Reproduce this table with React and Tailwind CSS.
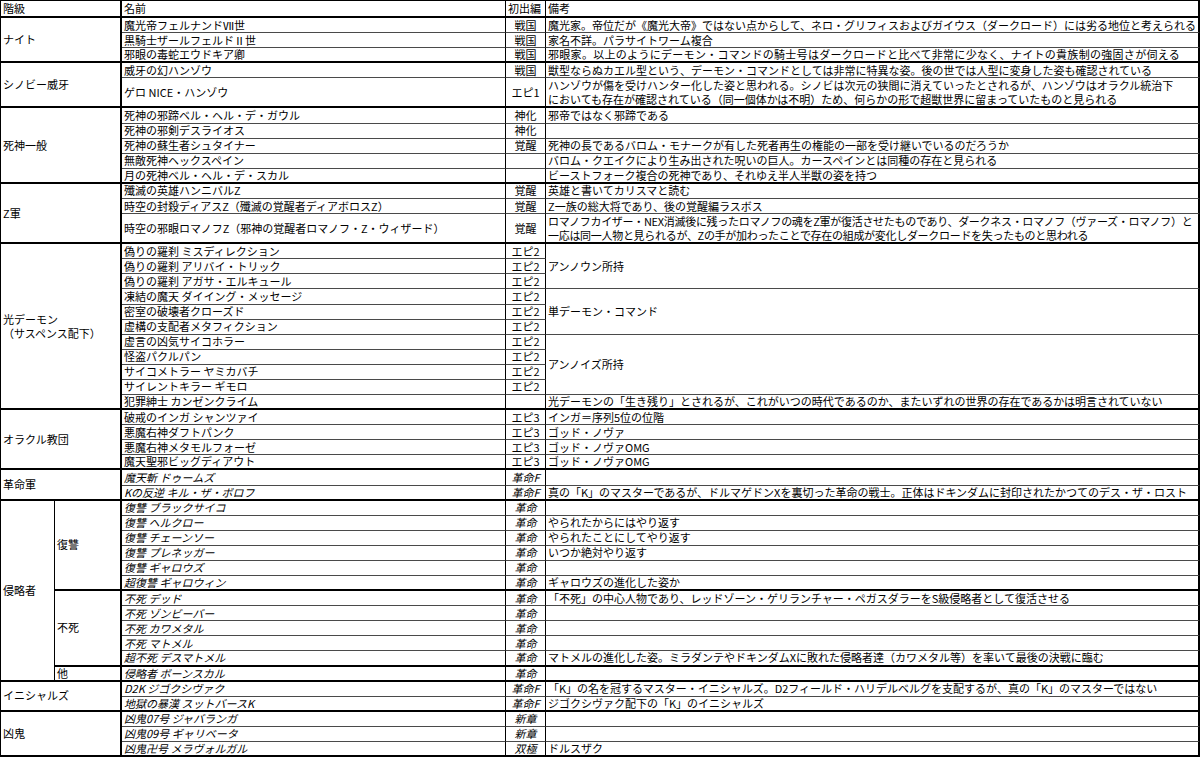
import React from 'react';

// 行データ: n=名前, e=初出編, r=備考, h=行の高さ(単位), rs=備考の結合行数, skip=備考セルが上と結合, t=備考の字間
const GROUPS = [
  {
    label: 'ナイト',
    segs: [{ rows: [
      { n: '魔光帝フェルナンドⅦ世', e: '戦国', r: '魔光家。帝位だが《魔光大帝》ではない点からして、ネロ・グリフィスおよびガイウス（ダークロード）には劣る地位と考えられる' },
      { n: '黒騎士ザールフェルドⅡ世', e: '戦国', r: '家名不詳。パラサイトワーム複合' },
      { n: '邪眼の毒蛇エウドキア卿', e: '戦国', r: '邪眼家。以上のようにデーモン・コマンドの騎士号はダークロードと比べて非常に少なく、ナイトの貴族制の強固さが伺える', t: 'tracking-[0.3px]' },
    ] }],
  },
  {
    label: 'シノビー威牙',
    segs: [{ rows: [
      { n: '威牙の幻ハンゾウ', e: '戦国', r: '獣型ならぬカエル型という、デーモン・コマンドとしては非常に特異な姿。後の世では人型に変身した姿も確認されている' },
      { n: 'ゲロ NICE・ハンゾウ', e: 'エピ1', h: 2, r: ['ハンゾウが傷を受けハンター化した姿と思われる。シノビは次元の狭間に消えていったとされるが、ハンゾウはオラクル統治下', 'においても存在が確認されている（同一個体かは不明）ため、何らかの形で超獣世界に留まっていたものと見られる'] },
    ] }],
  },
  {
    label: '死神一般',
    segs: [{ rows: [
      { n: '死神の邪蹄ベル・ヘル・デ・ガウル', e: '神化', r: '邪帝ではなく邪蹄である' },
      { n: '死神の邪剣デスライオス', e: '神化', r: '' },
      { n: '死神の蘇生者シュタイナー', e: '覚醒', r: '死神の長であるバロム・モナークが有した死者再生の権能の一部を受け継いでいるのだろうか' },
      { n: '無敵死神ヘックスペイン', e: '', r: 'バロム・クエイクにより生み出された呪いの巨人。カースペインとは同種の存在と見られる' },
      { n: '月の死神ベル・ヘル・デ・スカル', e: '', r: 'ビーストフォーク複合の死神であり、それゆえ半人半獣の姿を持つ' },
    ] }],
  },
  {
    label: 'Z軍',
    segs: [{ rows: [
      { n: '殲滅の英雄ハンニバルZ', e: '覚醒', r: '英雄と書いてカリスマと読む' },
      { n: '時空の封殺ディアスZ（殲滅の覚醒者ディアボロスZ）', e: '覚醒', r: 'Z一族の総大将であり、後の覚醒編ラスボス' },
      { n: '時空の邪眼ロマノフZ（邪神の覚醒者ロマノフ・Z・ウィザード）', e: '覚醒', h: 2, t: 'tracking-[-0.3px]', r: ['ロマノフカイザー・NEX消滅後に残ったロマノフの魂をZ軍が復活させたものであり、ダークネス・ロマノフ（ヴァーズ・ロマノフ）と', '一応は同一人物と見られるが、Zの手が加わったことで存在の組成が変化しダークロードを失ったものと思われる'] },
    ] }],
  },
  {
    label: ['光デーモン', '（サスペンス配下）'],
    segs: [{ rows: [
      { n: '偽りの羅刹 ミスディレクション', e: 'エピ2', r: 'アンノウン所持', rs: 3 },
      { n: '偽りの羅刹 アリバイ・トリック', e: 'エピ2', skip: true },
      { n: '偽りの羅刹 アガサ・エルキュール', e: 'エピ2', skip: true },
      { n: '凍結の魔天 ダイイング・メッセージ', e: 'エピ2', r: '単デーモン・コマンド', rs: 3 },
      { n: '密室の破壊者クローズド', e: 'エピ2', skip: true },
      { n: '虚構の支配者メタフィクション', e: 'エピ2', skip: true },
      { n: '虚言の凶気サイコホラー', e: 'エピ2', r: 'アンノイズ所持', rs: 4 },
      { n: '怪盗パクルパン', e: 'エピ2', skip: true },
      { n: 'サイコメトラー ヤミカバチ', e: 'エピ2', skip: true },
      { n: 'サイレントキラー ギモロ', e: 'エピ2', skip: true },
      { n: '犯罪紳士 カンゼンクライム', e: '', r: '光デーモンの「生き残り」とされるが、これがいつの時代であるのか、またいずれの世界の存在であるかは明言されていない' },
    ] }],
  },
  {
    label: 'オラクル教団',
    segs: [{ rows: [
      { n: '破戒のインガ シャンツァイ', e: 'エピ3', r: 'インガ＝序列5位の位階' },
      { n: '悪魔右神ダフトパンク', e: 'エピ3', r: 'ゴッド・ノヴァ' },
      { n: '悪魔右神メタモルフォーゼ', e: 'エピ3', r: 'ゴッド・ノヴァOMG' },
      { n: '魔天聖邪ビッグディアウト', e: 'エピ3', r: 'ゴッド・ノヴァOMG' },
    ] }],
  },
  {
    label: '革命軍',
    italic: true,
    segs: [{ rows: [
      { n: '魔天斬 ドゥームズ', e: '革命F', r: '' },
      { n: 'Kの反逆 キル・ザ・ボロフ', e: '革命F', r: '真の「K」のマスターであるが、ドルマゲドンXを裏切った革命の戦士。正体はドキンダムに封印されたかつてのデス・ザ・ロスト' },
    ] }],
  },
  {
    label: '侵略者',
    italic: true,
    sub: true,
    segs: [
      { label: '復讐', rows: [
        { n: '復讐 ブラックサイコ', e: '革命', r: '' },
        { n: '復讐 ヘルクロー', e: '革命', r: 'やられたからにはやり返す' },
        { n: '復讐 チェーンソー', e: '革命', r: 'やられたことにしてやり返す' },
        { n: '復讐 プレネッガー', e: '革命', r: 'いつか絶対やり返す' },
        { n: '復讐 ギャロウズ', e: '革命', r: '' },
        { n: '超復讐 ギャロウィン', e: '革命', r: 'ギャロウズの進化した姿か' },
      ] },
      { label: '不死', rows: [
        { n: '不死 デッド', e: '革命', r: '「不死」の中心人物であり、レッドゾーン・ゲリランチャー・ペガスダラーをS級侵略者として復活させる' },
        { n: '不死 ゾンビーバー', e: '革命', r: '' },
        { n: '不死 カワメタル', e: '革命', r: '' },
        { n: '不死 マトメル', e: '革命', r: '' },
        { n: '超不死 デスマトメル', e: '革命', r: 'マトメルの進化した姿。ミラダンテやドキンダムXに敗れた侵略者達（カワメタル等）を率いて最後の決戦に臨む' },
      ] },
      { label: '他', rows: [
        { n: '侵略者 ボーンスカル', e: '革命', r: '' },
      ] },
    ],
  },
  {
    label: 'イニシャルズ',
    italic: true,
    segs: [{ rows: [
      { n: 'D2K ジゴクシヴァク', e: '革命F', r: '「K」の名を冠するマスター・イニシャルズ。D2フィールド・ハリデルベルグを支配するが、真の「K」のマスターではない' },
      { n: '地獄の暴漢 スットバースK', e: '革命F', r: 'ジゴクシヴァク配下の「K」のイニシャルズ' },
    ] }],
  },
  {
    label: '凶鬼',
    italic: true,
    segs: [{ rows: [
      { n: '凶鬼07号 ジャバランガ', e: '新章', r: '' },
      { n: '凶鬼09号 ギャリベータ', e: '新章', r: '' },
      { n: '凶鬼卍号 メラヴォルガル', e: '双極', r: 'ドルスザク' },
    ] }],
  },
];

const SPAN = {
  1: '',
  2: 'row-span-2',
  3: 'row-span-3',
  4: 'row-span-4',
  5: 'row-span-5',
  6: 'row-span-6',
  11: 'row-span-11',
  12: 'row-span-12',
};

const base = 'flex items-center min-w-0 min-h-0 whitespace-nowrap px-[2px] leading-[13px]';
const thin = 'border-b border-b-[#4a4a4a]';
const thick = 'border-b-2 border-b-black';

const units = (rows) => rows.reduce((s, r) => s + (r.h || 1), 0);

function Lines({ text }) {
  if (Array.isArray(text)) {
    return (
      <span className="leading-[14px]">
        {text.map((t, i) => (
          <React.Fragment key={i}>
            {i > 0 && <br />}
            {t}
          </React.Fragment>
        ))}
      </span>
    );
  }
  return <span>{text}</span>;
}

function buildCells() {
  const cells = [];
  GROUPS.forEach((g, gi) => {
    const total = g.segs.reduce((s, seg) => s + units(seg.rows), 0);
    let first = true;
    g.segs.forEach((seg, si) => {
      const segUnits = units(seg.rows);
      let u = 0;
      seg.rows.forEach((row, ri) => {
        const h = row.h || 1;
        const key = `${gi}-${si}-${ri}`;
        if (first) {
          cells.push(
            <div
              key={`${key}-g`}
              className={`${base} ${SPAN[total]} ${g.sub ? 'border-r border-r-black' : 'col-span-2 border-r-2 border-r-black'} ${thick}`}
            >
              <Lines text={g.label} />
            </div>
          );
          first = false;
        }
        if (ri === 0 && seg.label) {
          cells.push(
            <div key={`${key}-s`} className={`${base} ${SPAN[segUnits]} border-r-2 border-r-black ${thick}`}>
              {seg.label}
            </div>
          );
        }
        const endRow = u + h === segUnits;
        const it = g.italic ? 'italic' : '';
        cells.push(
          <div key={`${key}-n`} className={`${base} ${SPAN[h]} ${it} border-r border-r-black ${endRow ? thick : thin}`}>
            {row.n}
          </div>
        );
        cells.push(
          <div key={`${key}-e`} className={`${base} ${SPAN[h]} ${it} justify-center border-r border-r-black ${endRow ? thick : thin}`}>
            {row.e}
          </div>
        );
        if (!row.skip) {
          const rs = row.rs || h;
          const endNote = u + rs === segUnits;
          cells.push(
            <div key={`${key}-r`} className={`${base} ${SPAN[rs]} ${row.t || ''} border-r-2 border-r-black ${endNote ? thick : thin}`}>
              <Lines text={row.r} />
            </div>
          );
        }
        u += h;
      });
    });
  });
  return cells;
}

export default function App() {
  return (
    <div className="w-[1200px] h-[757px] bg-white overflow-hidden">
      <div className="grid w-[1200px] h-[757px] grid-cols-[54px_67px_384px_40px_1fr] grid-rows-[17px_repeat(49,minmax(0,1fr))] border-l border-t border-black bg-white text-[11px] text-black font-['Noto_Sans_CJK_JP',sans-serif]">
        {/* ヘッダー */}
        <div className={`${base} col-span-2 border-r-2 border-r-black ${thick}`}>階級</div>
        <div className={`${base} border-r border-r-black ${thick}`}>名前</div>
        <div className={`${base} border-r border-r-black ${thick}`}>初出編</div>
        <div className={`${base} border-r-2 border-r-black ${thick}`}>備考</div>
        {buildCells()}
      </div>
    </div>
  );
}
